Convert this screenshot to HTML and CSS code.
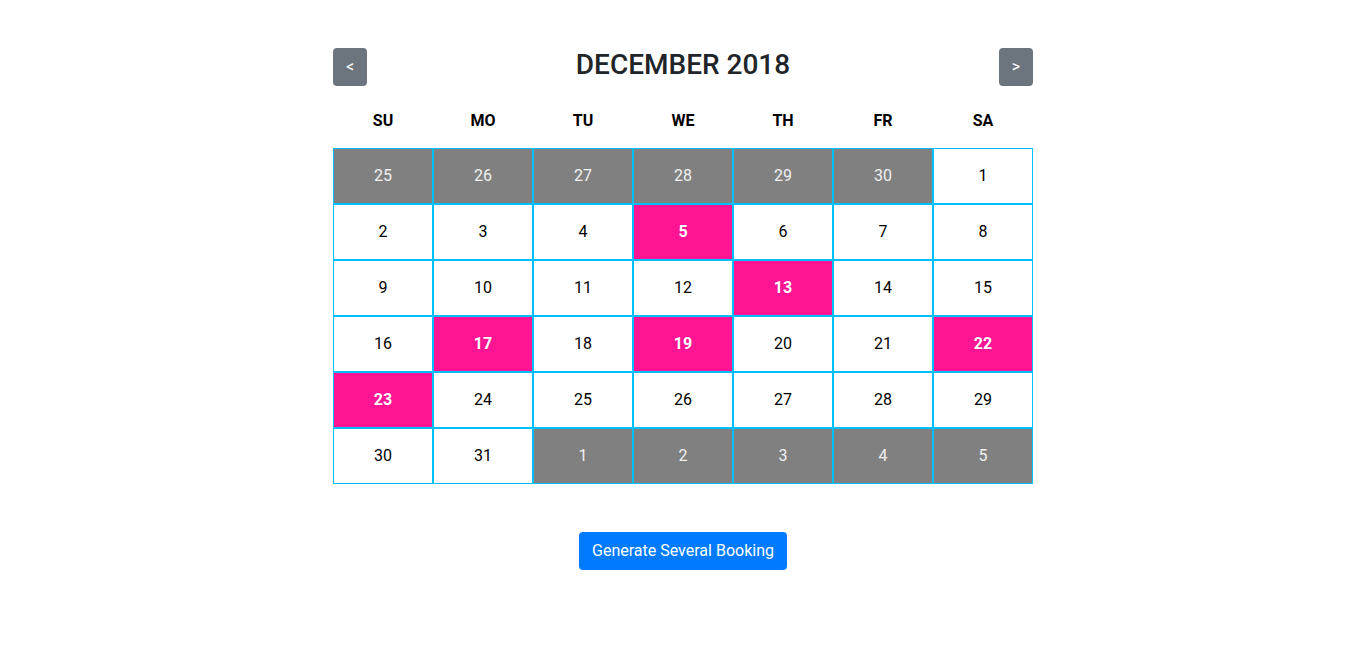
FILE: index.html
```html
<!DOCTYPE html>
<html>
<head>
<meta charset="utf-8">
<link rel="stylesheet" href="styles.css">
</head>
<body>
<div class="page">
  <div class="calendar">
    <div class="cal-head">
      <button class="nav-btn">&lt;</button>
      <h2 class="title">DECEMBER 2018</h2>
      <button class="nav-btn">&gt;</button>
    </div>
    <div class="weekdays">
      <div>SU</div><div>MO</div><div>TU</div><div>WE</div><div>TH</div><div>FR</div><div>SA</div>
    </div>
    <div class="grid">
      <div class="cell other">25</div><div class="cell other">26</div><div class="cell other">27</div><div class="cell other">28</div><div class="cell other">29</div><div class="cell other">30</div><div class="cell">1</div>
      <div class="cell">2</div><div class="cell">3</div><div class="cell">4</div><div class="cell booked">5</div><div class="cell">6</div><div class="cell">7</div><div class="cell">8</div>
      <div class="cell">9</div><div class="cell">10</div><div class="cell">11</div><div class="cell">12</div><div class="cell booked">13</div><div class="cell">14</div><div class="cell">15</div>
      <div class="cell">16</div><div class="cell booked">17</div><div class="cell">18</div><div class="cell booked">19</div><div class="cell">20</div><div class="cell">21</div><div class="cell booked">22</div>
      <div class="cell booked">23</div><div class="cell">24</div><div class="cell">25</div><div class="cell">26</div><div class="cell">27</div><div class="cell">28</div><div class="cell">29</div>
      <div class="cell">30</div><div class="cell">31</div><div class="cell other">1</div><div class="cell other">2</div><div class="cell other">3</div><div class="cell other">4</div><div class="cell other">5</div>
    </div>
  </div>
  <div class="actions">
    <button class="primary-btn">Generate Several Booking</button>
  </div>
</div>
</body>
</html>
```

FILE: styles.css
```css
html, body {
  margin: 0;
  padding: 0;
  background: #fff;
}
body {
  font-family: Roboto, "Liberation Sans", sans-serif;
  font-size: 16px;
  color: #212529;
}
.page {
  padding: 48px 0 0 15px;
  display: flex;
  flex-direction: column;
  align-items: center;
}
.calendar {
  width: 700px;
}
.cal-head {
  display: flex;
  align-items: center;
  justify-content: space-between;
  height: 38px;
}
.nav-btn {
  width: 34px;
  height: 38px;
  border: none;
  border-radius: 4px;
  background: #6c757d;
  color: #fff;
  font-family: Roboto, "Liberation Sans", sans-serif;
  font-size: 16px;
  padding: 0 0 1px;
}
.title {
  margin: 0 0 4px;
  font-size: 28px;
  font-weight: 500;
  line-height: 1.2;
  color: #212529;
}
.weekdays {
  display: grid;
  grid-template-columns: repeat(7, 100px);
  height: 62px;
  align-items: center;
  text-align: center;
  font-weight: 700;
  color: #000;
  padding-top: 6px;
  box-sizing: border-box;
}
.grid {
  display: grid;
  grid-template-columns: repeat(7, 100px);
  grid-auto-rows: 56px;
}
.cell {
  box-sizing: border-box;
  border: 1px solid #00bfff;
  padding-bottom: 2px;
  display: flex;
  align-items: center;
  justify-content: center;
  color: #000;
  background: #fff;
}
.cell.other {
  background: #808080;
  color: #f0f0f0;
}
.cell.booked {
  background: #ff1493;
  color: #fff;
  font-weight: 700;
}
.actions {
  margin-top: 48px;
}
.primary-btn {
  height: 38px;
  padding: 0 13px 2px;
  border: none;
  border-radius: 4px;
  background: #007bff;
  color: #fff;
  font-family: Roboto, "Liberation Sans", sans-serif;
  font-size: 16px;
}
```
